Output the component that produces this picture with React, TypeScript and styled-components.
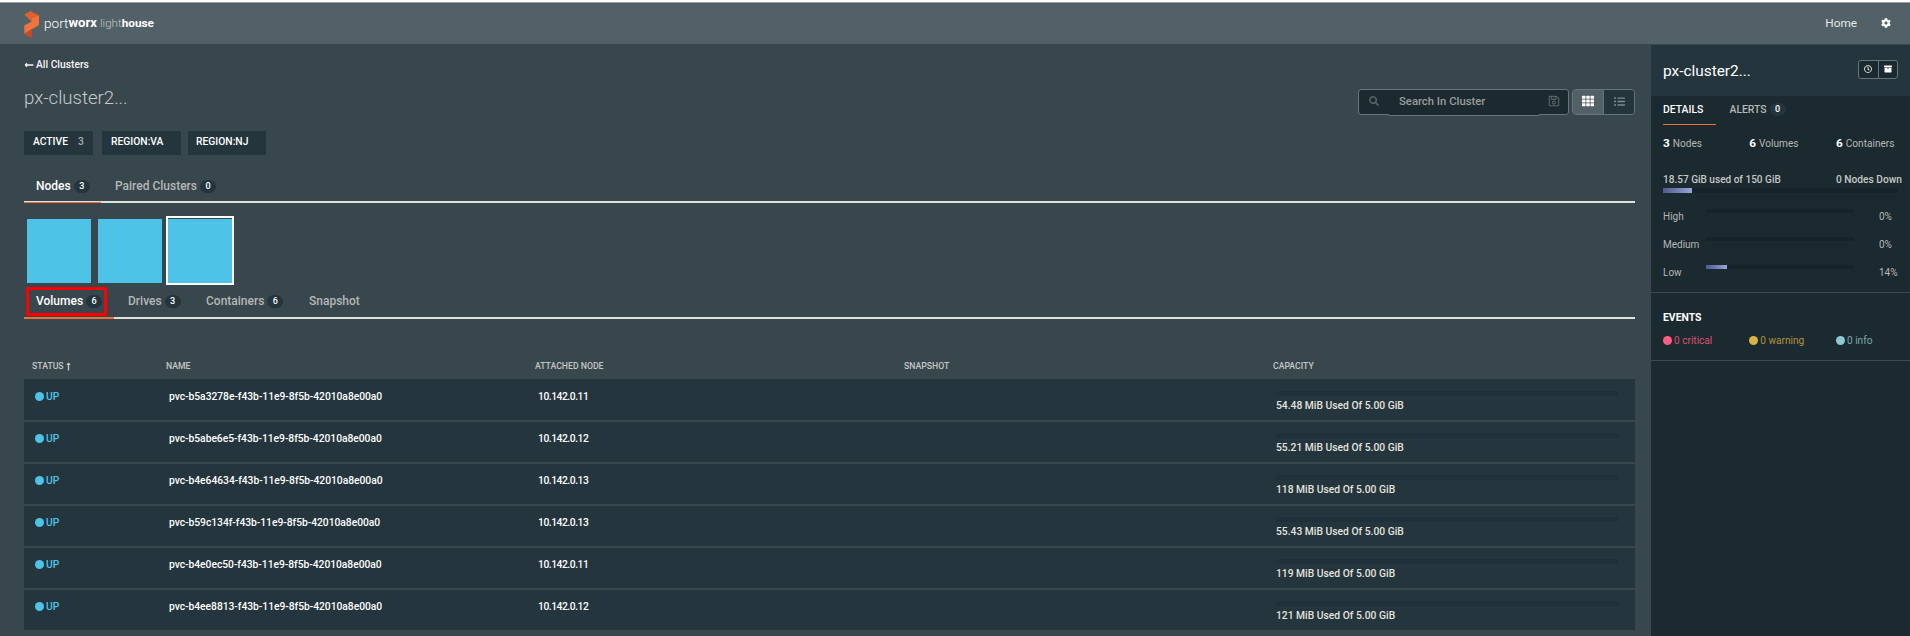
import React from "react";
import styled, { createGlobalStyle } from "styled-components";
import { FaArchive, FaCog, FaListUl, FaLongArrowAltLeft, FaLongArrowAltUp, FaRegClock, FaRegSave, FaSearch, FaTh } from "react-icons/fa";

const c = {
  page: "#38464d",
  bar: "#526067",
  panel: "#24353d",
  deep: "#1b2930",
  line: "#66757c",
  muted: "#b5b8b5",
  orange: "#f0703a",
  blue: "#4ec3e8",
};

const Global = createGlobalStyle`
  * { box-sizing: border-box; }
  body { margin: 0; background: ${c.page}; color: #fff; overflow: hidden;
    font-family: Roboto, "Liberation Sans", sans-serif; font-size: 10.3px; line-height: 15px; }
`;

const Page = styled.div`
  display: flex;
  flex-direction: column;
  height: 636px;
`;

/* Top bar */
const TopBar = styled.header`
  flex: none;
  height: 44px;
  display: flex;
  align-items: center;
  justify-content: space-between;
  padding: 0 19px 3px 24px;
  border-top: 2px solid #fff;
  background: ${c.bar};
  box-shadow: inset 0 1px 0 #9c9fa3;
`;
const Brand = styled.div`
  display: flex;
  align-items: center;
  padding-top: 5px;
`;
const Wordmark = styled.div`
  display: flex;
  margin: -2px 0 0 5px;
  line-height: 18px;
`;
const Word = styled.span<{ $size: number; $weight: number; $tone?: string; $gap?: number; $track?: number }>`
  font-size: ${(p) => p.$size}px;
  font-weight: ${(p) => p.$weight};
  color: ${(p) => p.$tone ?? "#fff"};
  margin-left: ${(p) => p.$gap ?? 0}px;
  letter-spacing: ${(p) => p.$track ?? 0}px;
`;
const TopNav = styled.nav`
  display: flex;
  align-items: center;
  gap: 24px;
  padding-top: 3px;
  font-size: 11.8px;
  color: #e6e8e8;
  svg { color: #fff; }
`;

/* Main column */
const Body = styled.div`
  flex: 1;
  display: flex;
  min-height: 0;
`;
const Main = styled.main`
  flex: 1;
  padding: 13px 16px 0 24px;
`;
const BackLink = styled.div`
  display: flex;
  align-items: center;
  gap: 2px;
  height: 15px;
  font-weight: 500;
  color: #f4f5f5;
`;
const TitleRow = styled.div`
  display: flex;
  justify-content: space-between;
  height: 30px;
  margin-top: 13px;
`;
const Title = styled.h1`
  margin: 0;
  font-size: 18.6px;
  line-height: 27px;
  font-weight: 300;
  color: #c6cbca;
`;
const Controls = styled.div`
  display: flex;
  align-self: flex-end;
  gap: 3px;
`;
const SearchBox = styled.div`
  display: flex;
  width: 211px;
  height: 26px;
  border: 1px solid ${c.line};
  border-radius: 3px;
  background: ${c.deep};
  color: #5b6265;
`;
const SearchSlot = styled.div<{ $width: number }>`
  width: ${(p) => p.$width}px;
  height: 22px;
  display: flex;
  align-items: center;
  justify-content: center;
`;
const SearchField = styled.div`
  width: 150px;
  height: 26px;
  padding-left: 10px;
  line-height: 23px;
  font-size: 11.3px;
  font-weight: 500;
  color: #9a9d9b;
  background: ${c.deep};
  border-bottom: 1px solid ${c.line};
`;
const Toggle = styled.div`
  display: flex;
  width: 63px;
  height: 26px;
  border: 1px solid ${c.line};
  border-radius: 4px;
  overflow: hidden;
`;
const ToggleItem = styled.div<{ $on?: boolean }>`
  flex: 1;
  display: flex;
  align-items: center;
  justify-content: center;
  padding-bottom: 2px;
  background: ${(p) => (p.$on ? c.bar : c.panel)};
  color: ${(p) => (p.$on ? "#fff" : "#7f8b90")};
  & + & { border-left: 1px solid ${c.line}; }
`;
const Chips = styled.div`
  display: flex;
  gap: 9px;
  margin-top: 16px;
`;
const Chip = styled.div<{ $width: number; $pull?: boolean }>`
  width: ${(p) => p.$width}px;
  margin-left: ${(p) => (p.$pull ? -2 : 0)}px;
  height: 24px;
  padding-left: ${(p) => (p.$pull ? 8 : 9)}px;
  line-height: 21px;
  font-weight: 500;
  background: ${c.panel};
  span { margin-left: 10px; font-weight: 500; color: #a5aaa9; }
`;
const Tabs = styled.div<{ $height: number; $top: number }>`
  display: flex;
  align-items: center;
  height: ${(p) => p.$height + 2}px;
  margin-top: ${(p) => p.$top}px;
  border-bottom: 2px solid #dfe1df;
`;
const Tab = styled.div<{ $width: number; $active?: boolean; $thin?: boolean }>`
  position: relative;
  flex: none;
  width: ${(p) => p.$width}px;
  height: 100%;
  display: flex;
  align-items: center;
  padding-left: ${(p) => (p.$active ? 12 : 14)}px;
  font-size: 12px;
  font-weight: 500;
  color: ${(p) => (p.$active ? "#fff" : c.muted)};
  &::after {
    content: "";
    display: ${(p) => (p.$active ? "block" : "none")};
    position: absolute;
    left: 0;
    right: 0;
    bottom: -2px;
    height: ${(p) => (p.$thin ? 1 : 2)}px;
    background: ${c.orange};
  }
`;
const Badge = styled.span`
  height: 13px;
  width: 16px;
  margin-left: 3px;
  border-radius: 7px;
  text-align: center;
  line-height: 13px;
  font-size: 9px;
  font-weight: 500;
  color: #fff;
  background: ${c.panel};
`;
const Nodes = styled.div`
  display: flex;
  height: 69px;
  margin-top: 13px;
  padding-left: 3px;
`;
const Node = styled.div`
  width: 64px;
  height: 64px;
  margin: 3px 7px 0 0;
  background: ${c.blue};
`;
const SelectedNode = styled.div`
  width: 68px;
  height: 69px;
  margin-left: -3px;
  border: 2px solid #fff;
  padding-top: 1px;
  ${Node} { margin: 0; }
`;
const Callout = styled.div`
  position: absolute;
  left: 2px;
  top: 2px;
  width: 81px;
  height: 29px;
  border: 3px solid #f00;
  border-radius: 2px;
`;

/* Volume table */
const Table = styled.div`
  margin-top: 34px;
`;
const HeadRow = styled.div`
  display: grid;
  grid-template-columns: 134px 369px 369px 369px 1fr;
  height: 26px;
  padding-left: 8px;
  line-height: 26px;
  font-size: 8.7px;
  font-weight: 500;
  color: #c3c6c3;
`;
const SortedHead = styled.span`
  display: flex;
  align-items: center;
`;
const Row = styled.div`
  display: grid;
  grid-template-columns: 134px 369px 369px 369px 1fr;
  height: 40px;
  margin-bottom: 2px;
  padding: 9px 0 0 11px;
  background: ${c.panel};
  font-weight: 500;
  &:nth-child(2) { height: 41px; padding-top: 10px; }
`;
const Status = styled.div`
  display: flex;
  align-items: center;
  gap: 2px;
  height: 15px;
  color: ${c.blue};
`;
const Dot = styled.i<{ $color: string }>`
  width: 9px;
  height: 9px;
  border-radius: 50%;
  background: ${(p) => p.$color};
`;
const VolumeName = styled.div`
  letter-spacing: -0.03px;
`;
const Address = styled.div`
  letter-spacing: -0.46px;
`;
const Capacity = styled.div`
  color: #e4e3dd;
`;
const CapacityTrack = styled.div`
  width: 342px;
  height: 5px;
  margin: 2px 0 2px;
  border-radius: 2px;
  background: #203038;
`;

/* Side panel */
const Side = styled.aside`
  flex: none;
  width: 259px;
  margin-top: 1px;
  background: ${c.deep};
  color: ${c.muted};
`;
const SideHead = styled.div`
  display: flex;
  justify-content: space-between;
  height: 51px;
  padding: 15px 12px 0 12px;
  background: ${c.panel};
`;
const SideTitle = styled.h2`
  margin: 0;
  padding-top: 1px;
  font-size: 15.4px;
  line-height: 20px;
  font-weight: 400;
  color: #fff;
`;
const ButtonPair = styled.div`
  display: flex;
  width: 40px;
  height: 19px;
  border: 1px solid ${c.line};
  border-radius: 3px;
  background: ${c.deep};
  color: #fff;
`;
const PairItem = styled.div`
  flex: 1;
  display: flex;
  align-items: center;
  justify-content: center;
  padding-bottom: 1px;
  & + & { border-left: 1px solid ${c.line}; }
`;
const SideTabs = styled.div`
  display: flex;
  height: 29px;
  margin-left: 12px;
  gap: 13.5px;
`;
const SideTab = styled.div<{ $active?: boolean }>`
  display: flex;
  align-items: center;
  width: ${(p) => (p.$active ? 53 : 60)}px;
  height: 29px;
  padding-bottom: 1px;
  font-size: 10.4px;
  font-weight: 500;
  color: ${(p) => (p.$active ? "#fff" : c.muted)};
  border-bottom: 1px solid ${(p) => (p.$active ? c.orange : "transparent")};
`;
const Thirds = styled.div<{ $top: number }>`
  display: grid;
  grid-template-columns: 86.3px 86.7px 1fr;
  margin: ${(p) => p.$top}px 0 0 12px;
  height: 15px;
  white-space: nowrap;
  font-size: 10.1px;
  b { font-size: 11.8px; font-weight: 700; color: #fff; margin-right: 3px; }
`;
const UsageLabels = styled.div`
  display: flex;
  justify-content: space-between;
  margin: 21px 8px 0 12px;
  font-size: 10.05px;
  font-weight: 500;
  color: #c6c8c5;
`;
const NodesDown = styled.span`
  font-size: 10.2px;
`;
const Track = styled.div<{ $width: number; $height: number }>`
  width: ${(p) => p.$width}px;
  height: ${(p) => p.$height}px;
  border-radius: 2px;
  background: #17232a;
`;
const Fill = styled.div<{ $width: number }>`
  width: ${(p) => p.$width}px;
  height: 100%;
  background: linear-gradient(90deg, #4c5a8c, #9aa5d6);
`;
const UsageBar = styled.div`
  margin: 1px 0 0 12px;
`;
const Levels = styled.div`
  padding: 14px 0 5px 12px;
  border-bottom: 1px solid #3c494f;
`;
const Level = styled.div`
  display: grid;
  grid-template-columns: 43px 173px 1fr;
  height: 28px;
  &:last-child { height: 24px; }
  font-size: 10px;
  ${Track} { margin-top: 2px; }
`;
const LevelText = styled.span`
  line-height: 20px;
`;
const Events = styled.section`
  height: 68px;
  padding-top: 17px;
  border-bottom: 1px solid #3c494f;
`;
const EventsTitle = styled.h3`
  margin: 0 0 0 12px;
  font-size: 10.4px;
  font-weight: 700;
  line-height: 15px;
  color: #fff;
`;
const EventCount = styled.div<{ $color: string }>`
  display: flex;
  align-items: center;
  gap: 2px;
  font-size: 10.1px;
  color: ${(p) => p.$color};
`;

const volumes = [
  ["pvc-b5a3278e-f43b-11e9-8f5b-42010a8e00a0", "10.142.0.11", "54.48 MiB"],
  ["pvc-b5abe6e5-f43b-11e9-8f5b-42010a8e00a0", "10.142.0.12", "55.21 MiB"],
  ["pvc-b4e64634-f43b-11e9-8f5b-42010a8e00a0", "10.142.0.13", "118 MiB"],
  ["pvc-b59c134f-f43b-11e9-8f5b-42010a8e00a0", "10.142.0.13", "55.43 MiB"],
  ["pvc-b4e0ec50-f43b-11e9-8f5b-42010a8e00a0", "10.142.0.11", "119 MiB"],
  ["pvc-b4ee8813-f43b-11e9-8f5b-42010a8e00a0", "10.142.0.12", "121 MiB"],
];

const levels = [
  { name: "High", value: "0%", fill: 0 },
  { name: "Medium", value: "0%", fill: 0 },
  { name: "Low", value: "14%", fill: 21 },
];

const events = [
  { label: "0 critical", dot: "#ff5d82", text: "#d9536f" },
  { label: "0 warning", dot: "#dab342", text: "#b3923c" },
  { label: "0 info", dot: "#8cc9d0", text: "#7ba9ac" },
];

function Logo() {
  return (
    <svg width="15" height="27" viewBox="0 0 15 27">
      <polygon points="0.3,3.4 6.6,0 15,4.6 7.8,11" fill="#e2602f" />
      <polygon points="15,4.6 15,14 0.3,22.8 0.3,14.6 7.8,10.4 7.8,7.6" fill="#f0743b" />
      <polygon points="0.3,22.8 7.8,18 7.8,27 0.3,23.6" fill="#c74a2b" />
    </svg>
  );
}

export default function App() {
  return (
    <Page>
      <Global />
      <TopBar>
        <Brand>
          <Logo />
          <Wordmark>
            <Word $size={13.6} $weight={300}>port</Word>
            <Word $size={13.1} $weight={700}>worx</Word>
            <Word $size={11.6} $weight={300} $tone="#c2c8ca" $gap={3}>light</Word>
            <Word $size={11.8} $weight={700}>house</Word>
          </Wordmark>
        </Brand>
        <TopNav>
          <span>Home</span>
          <FaCog size={10} />
        </TopNav>
      </TopBar>
      <Body>
        <Main>
          <BackLink>
            <FaLongArrowAltLeft size={10} />
            All Clusters
          </BackLink>
          <TitleRow>
            <Title>px-cluster2...</Title>
            <Controls>
              <SearchBox>
                <SearchSlot $width={30}><FaSearch size={10} /></SearchSlot>
                <SearchField>Search In Cluster</SearchField>
                <SearchSlot $width={29}><FaRegSave size={12} /></SearchSlot>
              </SearchBox>
              <Toggle>
                <ToggleItem $on><FaTh size={12} /></ToggleItem>
                <ToggleItem><FaListUl size={11} /></ToggleItem>
              </Toggle>
            </Controls>
          </TitleRow>
          <Chips>
            <Chip $width={69}>ACTIVE<span>3</span></Chip>
            <Chip $width={79}>REGION:VA</Chip>
            <Chip $width={78} $pull>REGION:NJ</Chip>
          </Chips>
          <Tabs $height={30} $top={16}>
            <Tab $width={77} $active $thin>Nodes<Badge>3</Badge></Tab>
            <Tab $width={130}>Paired Clusters<Badge>0</Badge></Tab>
          </Tabs>
          <Nodes>
            <Node />
            <Node />
            <SelectedNode><Node /></SelectedNode>
          </Nodes>
          <Tabs $height={32} $top={0}>
            <Tab $width={90} $active>Volumes<Badge>6</Badge><Callout /></Tab>
            <Tab $width={78}>Drives<Badge>3</Badge></Tab>
            <Tab $width={103}>Containers<Badge>6</Badge></Tab>
            <Tab $width={80}>Snapshot</Tab>
          </Tabs>
          <Table>
            <HeadRow>
              <SortedHead>STATUS<FaLongArrowAltUp size={9} /></SortedHead>
              <span>NAME</span>
              <span>ATTACHED NODE</span>
              <span>SNAPSHOT</span>
              <span>CAPACITY</span>
            </HeadRow>
            {volumes.map(([name, address, used]) => (
              <Row key={name}>
                <Status><Dot $color={c.blue} />UP</Status>
                <VolumeName>{name}</VolumeName>
                <Address>{address}</Address>
                <span />
                <Capacity>
                  <CapacityTrack />
                  {used} Used Of 5.00 GiB
                </Capacity>
              </Row>
            ))}
          </Table>
        </Main>
        <Side>
          <SideHead>
            <SideTitle>px-cluster2...</SideTitle>
            <ButtonPair>
              <PairItem><FaRegClock size={8} /></PairItem>
              <PairItem><FaArchive size={8} /></PairItem>
            </ButtonPair>
          </SideHead>
          <SideTabs>
            <SideTab $active>DETAILS</SideTab>
            <SideTab>ALERTS<Badge>0</Badge></SideTab>
          </SideTabs>
          <Thirds $top={11}>
            <span><b>3</b>Nodes</span>
            <span><b>6</b>Volumes</span>
            <span><b>6</b>Containers</span>
          </Thirds>
          <UsageLabels>
            <span>18.57 GiB used of 150 GiB</span>
            <NodesDown>0 Nodes Down</NodesDown>
          </UsageLabels>
          <UsageBar>
            <Track $width={235} $height={5}><Fill $width={29} /></Track>
          </UsageBar>
          <Levels>
            {levels.map((l) => (
              <Level key={l.name}>
                <LevelText>{l.name}</LevelText>
                <Track $width={148} $height={4}><Fill $width={l.fill} /></Track>
                <LevelText>{l.value}</LevelText>
              </Level>
            ))}
          </Levels>
          <Events>
            <EventsTitle>EVENTS</EventsTitle>
            <Thirds $top={8}>
              {events.map((e) => (
                <EventCount key={e.label} $color={e.text}><Dot $color={e.dot} />{e.label}</EventCount>
              ))}
            </Thirds>
          </Events>
        </Side>
      </Body>
    </Page>
  );
}
